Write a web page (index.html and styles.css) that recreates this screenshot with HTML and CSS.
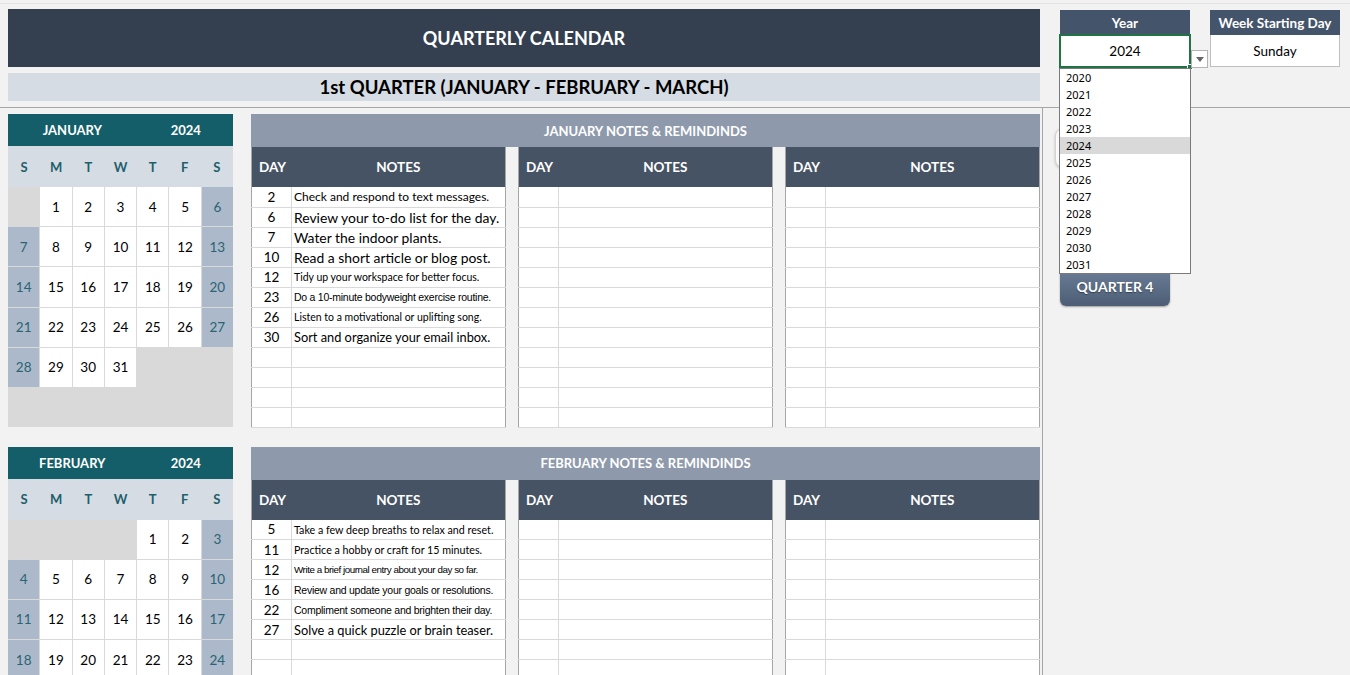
FILE: index.html
```html
<!DOCTYPE html>
<html>
<head>
<meta charset="utf-8">
<link rel="stylesheet" href="styles.css">
</head>
<body>
<div class="topline"></div>
<div class="top">
  <div class="top-left">
    <div class="title">QUARTERLY CALENDAR</div>
    <div class="subtitle">1st QUARTER (JANUARY - FEBRUARY - MARCH)</div>
  </div>
  <div class="top-right">
    <div class="setting year">
      <div class="set-head">Year</div>
      <div class="set-val selected">2024<span class="handle"></span></div>
      <div class="dd-btn"><svg width="8" height="5" viewBox="0 0 8 5"><path d="M0 0h8L4 5z" fill="#666"/></svg></div>
      <ul class="dd-list">
        <li>2020</li><li>2021</li><li>2022</li><li>2023</li><li class="hl">2024</li><li>2025</li>
        <li>2026</li><li>2027</li><li>2028</li><li>2029</li><li>2030</li><li>2031</li>
      </ul>
    </div>
    <div class="setting">
      <div class="set-head">Week Starting Day</div>
      <div class="set-val">Sunday</div>
    </div>
  </div>
</div>

<div class="main">
  <div class="content">
    <!-- JANUARY -->
    <section class="month">
      <div class="cal">
        <div class="cal-head"><span class="m">JANUARY</span><span class="y">2024</span></div>
        <div class="dow"><span>S</span><span>M</span><span>T</span><span>W</span><span>T</span><span>F</span><span>S</span></div>
        <div class="days">
          <span class="e"></span><span>1</span><span>2</span><span>3</span><span>4</span><span>5</span><span class="w">6</span>
          <span class="w">7</span><span>8</span><span>9</span><span>10</span><span>11</span><span>12</span><span class="w">13</span>
          <span class="w">14</span><span>15</span><span>16</span><span>17</span><span>18</span><span>19</span><span class="w">20</span>
          <span class="w">21</span><span>22</span><span>23</span><span>24</span><span>25</span><span>26</span><span class="w">27</span>
          <span class="w">28</span><span>29</span><span>30</span><span>31</span><span class="e"></span><span class="e"></span><span class="e"></span>
          <span class="e"></span><span class="e"></span><span class="e"></span><span class="e"></span><span class="e"></span><span class="e"></span><span class="e"></span>
        </div>
      </div>
      <div class="notes">
        <div class="notes-band">JANUARY NOTES &amp; REMINDINDS</div>
        <div class="tables">
          <table class="nt">
            <tr class="th"><th class="d">DAY</th><th>NOTES</th></tr>
            <tr><td class="d">2</td><td class="n s12">Check and respond to text messages.</td></tr>
            <tr><td class="d">6</td><td class="n s14">Review your to-do list for the day.</td></tr>
            <tr><td class="d">7</td><td class="n s14">Water the indoor plants.</td></tr>
            <tr><td class="d">10</td><td class="n s14">Read a short article or blog post.</td></tr>
            <tr><td class="d">12</td><td class="n s10">Tidy up your workspace for better focus.</td></tr>
            <tr><td class="d">23</td><td class="n t11">Do a 10-minute bodyweight exercise routine.</td></tr>
            <tr><td class="d">26</td><td class="n s10">Listen to a motivational or uplifting song.</td></tr>
            <tr><td class="d">30</td><td class="n s13">Sort and organize your email inbox.</td></tr>
            <tr><td class="d"></td><td></td></tr>
            <tr><td class="d"></td><td></td></tr>
            <tr><td class="d"></td><td></td></tr>
            <tr><td class="d"></td><td></td></tr>
          </table>
          <table class="nt">
            <tr class="th"><th class="d">DAY</th><th>NOTES</th></tr>
            <tr><td class="d"></td><td></td></tr><tr><td class="d"></td><td></td></tr><tr><td class="d"></td><td></td></tr>
            <tr><td class="d"></td><td></td></tr><tr><td class="d"></td><td></td></tr><tr><td class="d"></td><td></td></tr>
            <tr><td class="d"></td><td></td></tr><tr><td class="d"></td><td></td></tr><tr><td class="d"></td><td></td></tr>
            <tr><td class="d"></td><td></td></tr><tr><td class="d"></td><td></td></tr><tr><td class="d"></td><td></td></tr>
          </table>
          <table class="nt">
            <tr class="th"><th class="d">DAY</th><th>NOTES</th></tr>
            <tr><td class="d"></td><td></td></tr><tr><td class="d"></td><td></td></tr><tr><td class="d"></td><td></td></tr>
            <tr><td class="d"></td><td></td></tr><tr><td class="d"></td><td></td></tr><tr><td class="d"></td><td></td></tr>
            <tr><td class="d"></td><td></td></tr><tr><td class="d"></td><td></td></tr><tr><td class="d"></td><td></td></tr>
            <tr><td class="d"></td><td></td></tr><tr><td class="d"></td><td></td></tr><tr><td class="d"></td><td></td></tr>
          </table>
        </div>
      </div>
    </section>

    <!-- FEBRUARY -->
    <section class="month">
      <div class="cal">
        <div class="cal-head"><span class="m">FEBRUARY</span><span class="y">2024</span></div>
        <div class="dow"><span>S</span><span>M</span><span>T</span><span>W</span><span>T</span><span>F</span><span>S</span></div>
        <div class="days">
          <span class="e"></span><span class="e"></span><span class="e"></span><span class="e"></span><span>1</span><span>2</span><span class="w">3</span>
          <span class="w">4</span><span>5</span><span>6</span><span>7</span><span>8</span><span>9</span><span class="w">10</span>
          <span class="w">11</span><span>12</span><span>13</span><span>14</span><span>15</span><span>16</span><span class="w">17</span>
          <span class="w">18</span><span>19</span><span>20</span><span>21</span><span>22</span><span>23</span><span class="w">24</span>
          <span class="w">25</span><span>26</span><span>27</span><span>28</span><span>29</span><span class="e"></span><span class="e"></span>
          <span class="e"></span><span class="e"></span><span class="e"></span><span class="e"></span><span class="e"></span><span class="e"></span><span class="e"></span>
        </div>
      </div>
      <div class="notes">
        <div class="notes-band">FEBRUARY NOTES &amp; REMINDINDS</div>
        <div class="tables">
          <table class="nt">
            <tr class="th"><th class="d">DAY</th><th>NOTES</th></tr>
            <tr><td class="d">5</td><td class="n s11">Take a few deep breaths to relax and reset.</td></tr>
            <tr><td class="d">11</td><td class="n s11">Practice a hobby or craft for 15 minutes.</td></tr>
            <tr><td class="d">12</td><td class="n t10">Write a brief journal entry about your day so far.</td></tr>
            <tr><td class="d">16</td><td class="n t11">Review and update your goals or resolutions.</td></tr>
            <tr><td class="d">22</td><td class="n t11">Compliment someone and brighten their day.</td></tr>
            <tr><td class="d">27</td><td class="n s13">Solve a quick puzzle or brain teaser.</td></tr>
            <tr><td class="d"></td><td></td></tr>
            <tr><td class="d"></td><td></td></tr>
            <tr><td class="d"></td><td></td></tr>
            <tr><td class="d"></td><td></td></tr>
            <tr><td class="d"></td><td></td></tr>
            <tr><td class="d"></td><td></td></tr>
          </table>
          <table class="nt">
            <tr class="th"><th class="d">DAY</th><th>NOTES</th></tr>
            <tr><td class="d"></td><td></td></tr><tr><td class="d"></td><td></td></tr><tr><td class="d"></td><td></td></tr>
            <tr><td class="d"></td><td></td></tr><tr><td class="d"></td><td></td></tr><tr><td class="d"></td><td></td></tr>
            <tr><td class="d"></td><td></td></tr><tr><td class="d"></td><td></td></tr><tr><td class="d"></td><td></td></tr>
            <tr><td class="d"></td><td></td></tr><tr><td class="d"></td><td></td></tr><tr><td class="d"></td><td></td></tr>
          </table>
          <table class="nt">
            <tr class="th"><th class="d">DAY</th><th>NOTES</th></tr>
            <tr><td class="d"></td><td></td></tr><tr><td class="d"></td><td></td></tr><tr><td class="d"></td><td></td></tr>
            <tr><td class="d"></td><td></td></tr><tr><td class="d"></td><td></td></tr><tr><td class="d"></td><td></td></tr>
            <tr><td class="d"></td><td></td></tr><tr><td class="d"></td><td></td></tr><tr><td class="d"></td><td></td></tr>
            <tr><td class="d"></td><td></td></tr><tr><td class="d"></td><td></td></tr><tr><td class="d"></td><td></td></tr>
          </table>
        </div>
      </div>
    </section>
  </div>

  <div class="side">
    <div class="qbtn q1"><span>QUARTER 1</span></div>
    <div class="qbtn">QUARTER 2</div>
    <div class="qbtn">QUARTER 3</div>
    <div class="qbtn">QUARTER 4</div>
  </div>
</div>
</body>
</html>
```
FILE: styles.css
```css
* { box-sizing: border-box; }
html, body { margin: 0; padding: 0; }
body {
  width: 1350px;
  height: 675px;
  overflow: hidden;
  background: #f2f2f2;
  font-family: Lato, "Liberation Sans", sans-serif;
  color: #000;
}
.topline { height: 4px; border-bottom: 1px solid #e3e3e3; }

/* ---------- top ---------- */
.top {
  display: flex;
  height: 104px;
  border-bottom: 1px solid #a6a6a6;
}
.top-left { width: 1032px; margin-left: 8px; padding-top: 5px; }
.title {
  height: 58px;
  background: #343f50;
  color: #fff;
  font-weight: 700;
  font-size: 18px;
  display: flex; align-items: center; justify-content: center;
}
.subtitle {
  margin-top: 6px;
  height: 28px;
  background: #d6dce4;
  font-weight: 700;
  font-size: 18.5px;
  display: flex; align-items: center; justify-content: center;
}
.top-right { display: flex; gap: 20px; margin-left: 20px; padding-top: 6px; }
.setting { width: 130px; position: relative; }
.set-head {
  height: 25px;
  background: #44546a;
  color: #fff;
  font-weight: 700;
  font-size: 13.5px;
  display: flex; align-items: center; justify-content: center;
}
.set-val {
  height: 32px;
  background: #fff;
  border: 1px solid #bfbfbf;
  border-top: none;
  font-size: 13.5px;
  display: flex; align-items: center; justify-content: center;
  position: relative;
}
.set-val.selected { border: 2px solid #217346; height: 34px; margin-top: -1px; margin-left: -1px; width: 132px; }
.handle {
  position: absolute; right: -4px; bottom: -4px;
  width: 6px; height: 6px; background: #217346; border: 1px solid #fff;
}
.dd-btn {
  position: absolute; left: 131px; top: 40px;
  width: 17px; height: 18px;
  background: #fff; border: 1px solid #b4b4b4;
  display: flex; align-items: center; justify-content: center;
}
.dd-list {
  position: absolute; left: -1px; top: 58px;
  width: 132px; margin: 0; padding: 0;
  list-style: none;
  background: #fff;
  border: 1px solid #7a7a7a;
  z-index: 5;
  font-family: "Noto Sans", "Open Sans", sans-serif;
  font-size: 11px;
}
.dd-list li { height: 17px; line-height: 17px; padding-left: 6px; }
.dd-list li.hl { background: #d9d9d9; }

/* ---------- main ---------- */
.main { display: flex; }
.content { width: 1032px; margin-left: 8px; padding-top: 6px; }
.side {
  margin-left: 2px;
  border-left: 1px solid #a6a6a6;
  height: 570px;
  padding: 20px 0 0 17px;
  display: flex; flex-direction: column; gap: 6px;
}
.qbtn {
  width: 110px; height: 40px;
  border-radius: 6px;
  background: linear-gradient(#6e809a, #4c5d75);
  color: #fff;
  font-weight: 700;
  font-size: 14px;
  display: flex; align-items: center; justify-content: center;
  box-shadow: 0 1px 2px rgba(0,0,0,.35);
  text-shadow: 0 1px 1px rgba(0,0,0,.4);
}
.qbtn.q1 {
  margin-left: -5px; width: 120px;
  background: #fafafa; color: #44546a;
  border: 1px solid #d4d4d4;
  border-radius: 8px;
  text-shadow: none;
  box-shadow: 0 1px 3px rgba(0,0,0,.2);
}

.month { display: flex; gap: 18px; margin-bottom: 19px; }

/* calendar */
.cal { width: 225px; height: 313px; background: #d9d9d9; display: flex; flex-direction: column; }
.cal-head {
  height: 32px; background: #135e68; color: #fff;
  font-weight: 700; font-size: 13px;
  display: grid; grid-template-columns: 4fr 3fr; align-items: center; text-align: center;
}
.cal-head .y { padding-left: 2px; }
.dow {
  height: 41px; background: #d6dce4;
  display: grid; grid-template-columns: repeat(7, 1fr); align-items: center; text-align: center;
  color: #1e5f6b; font-weight: 700; font-size: 13px;
}
.days {
  flex: 1;
  display: grid;
  grid-template-columns: repeat(7, 1fr);
  grid-template-rows: repeat(6, 1fr);
  gap: 1px;
  background: #d9d9d9;
  font-size: 13.5px;
}
.days span { background: #fff; display: flex; align-items: center; justify-content: center; }
.days span.w { background: #acb9ca; color: #2a6472; }
.days span.e { background: #d9d9d9; }

/* notes */
.notes { width: 789px; }
.notes-band {
  height: 33px; background: #8e9aab; color: #fff;
  font-weight: 700; font-size: 13px;
  display: flex; align-items: center; justify-content: center;
}
.tables { display: flex; gap: 12px; }
.nt {
  width: 255px;
  border-collapse: collapse;
  background: #fff;
  border: 1px solid #a6a6a6;
  border-top: none;
  table-layout: fixed;
}
.nt tr { height: 20px; }
.nt tr.th { height: 40px; background: #465364; color: #fff; }
.nt th { font-size: 13.5px; font-weight: 700; text-align: center; padding: 0; }
.nt th.d { text-align: left; padding-left: 7px; width: 40px; }
.nt td { border-bottom: 1px solid #d9d9d9; padding: 0; font-size: 13.5px; white-space: nowrap; overflow: hidden; }
.nt td.d { width: 40px; border-right: 1px solid #d9d9d9; text-align: center; }
.nt td.n { padding-left: 2px; }
.s14 { font-size: 13.9px !important; }
.s13 { font-size: 12.8px !important; }
.s12 { font-size: 12px !important; }
.s11 { font-size: 10.7px !important; }
.s10 { font-size: 10.5px !important; }
.t11 { font-family: "Liberation Sans", sans-serif; font-size: 10.5px !important; letter-spacing: -0.25px; }
.t10 { font-family: "Liberation Sans", sans-serif; font-size: 9.8px !important; letter-spacing: -0.45px; }
```
